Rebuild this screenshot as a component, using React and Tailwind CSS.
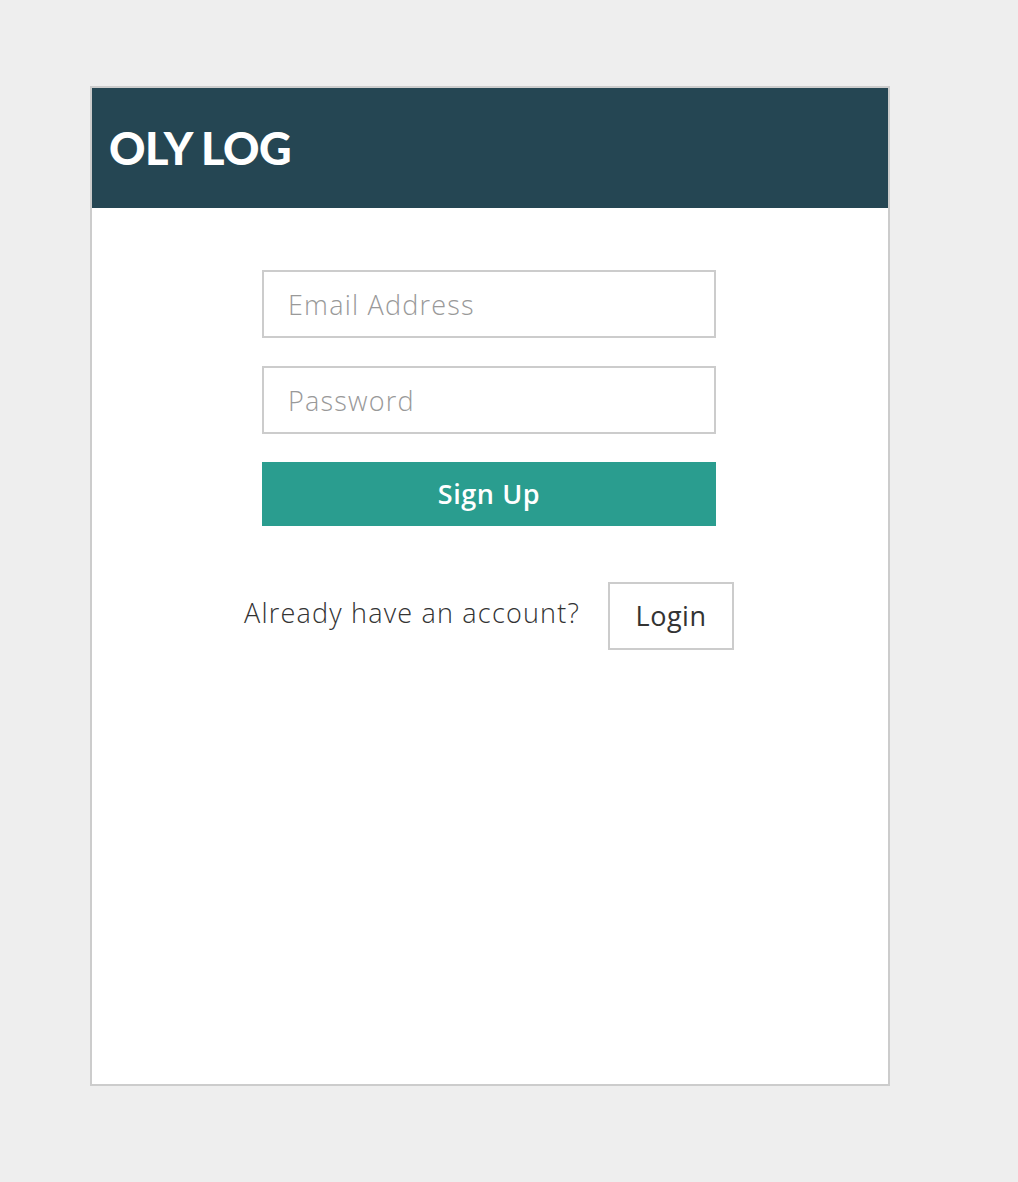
const App = () => {
  return (
    <div className="min-h-[1182px] bg-[#eeeeee] pt-[86px] pl-[90px]" style={{ fontFamily: '"Open Sans", "Liberation Sans", sans-serif' }}>
      <div className="w-[800px] h-[1000px] border-2 border-[#cccccc] bg-white">
        {/* header */}
        <div className="h-[120px] bg-[#254653] flex items-center pl-[17px]">
          <h1 className="text-white text-[45px] tracking-[-0.5px] leading-none" style={{ fontFamily: 'Lato, "Open Sans", sans-serif', fontWeight: 900 }}>
            OLY LOG
          </h1>
        </div>

        {/* form */}
        <div className="flex flex-col items-center pt-[62px] pr-[2px]">
          <input
            type="email"
            placeholder="Email Address"
            className="w-[454px] h-[68px] border-2 border-[#cccccc] px-[24px] text-[27px] tracking-[1.2px] font-light text-[#333] placeholder:text-[#999] outline-none"
          />
          <input
            type="password"
            placeholder="Password"
            className="w-[454px] h-[68px] border-2 border-[#cccccc] px-[24px] mt-[28px] text-[27px] tracking-[1.2px] font-light text-[#333] placeholder:text-[#999] outline-none"
          />
          <button className="w-[454px] h-[64px] mt-[28px] bg-[#2a9d8f] text-white text-[27px] tracking-[0.6px] font-semibold">
            Sign Up
          </button>

          <div className="flex items-center gap-[28px] mt-[56px]">
            <span className="text-[27px] tracking-[1.2px] font-light text-[#333] -mt-[6px]">Already have an account?</span>
            <button className="w-[126px] h-[68px] border-2 border-[#cccccc] bg-white text-[27px] tracking-[0.5px] text-[#333]">
              Login
            </button>
          </div>
        </div>
      </div>
    </div>
  );
};

export default App;
